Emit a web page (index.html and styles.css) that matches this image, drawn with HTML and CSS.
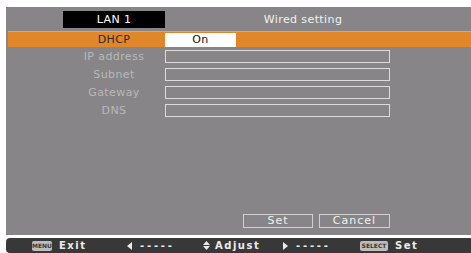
FILE: index.html
```html
<!DOCTYPE html>
<html lang="en">
<head>
    <meta charset="UTF-8">
    <title>Wired setting</title>
    <link rel="stylesheet" href="styles.css">
</head>
<body>
    <div class="panel">
        <div class="head">
            <div class="lan">LAN 1</div>
            <div class="title">Wired setting</div>
        </div>

        <div class="row dhcp">
            <div class="label">DHCP</div>
            <div class="value">On</div>
        </div>

        <div class="row">
            <div class="label off">IP address</div>
            <div class="field"></div>
        </div>
        <div class="row">
            <div class="label off">Subnet</div>
            <div class="field"></div>
        </div>
        <div class="row">
            <div class="label off">Gateway</div>
            <div class="field"></div>
        </div>
        <div class="row">
            <div class="label off">DNS</div>
            <div class="field"></div>
        </div>

        <div class="buttons">
            <div class="btn set">Set</div>
            <div class="btn cancel">Cancel</div>
        </div>
    </div>

    <div class="footer">
        <div class="group g1"><span class="badge menu">MENU</span><span>Exit</span></div>
        <div class="group g2">
            <svg class="arrow" width="5" height="8" viewBox="0 0 5 8"><path d="M5 0 L0 4 L5 8 Z" fill="#ececec"/></svg>
            <span class="dash">-----</span>
        </div>
        <div class="group g3">
            <svg class="arrow" width="7" height="9" viewBox="0 0 7 9"><path d="M3.5 0 L7 4 L0 4 Z M0 5 L7 5 L3.5 9 Z" fill="#ececec"/></svg>
            <span>Adjust</span>
        </div>
        <div class="group g4">
            <svg class="arrow" width="5" height="8" viewBox="0 0 5 8"><path d="M0 0 L5 4 L0 8 Z" fill="#ececec"/></svg>
            <span class="dash">-----</span>
        </div>
        <div class="group g5"><span class="badge select">SELECT</span><span>Set</span></div>
    </div>
</body>
</html>
```

FILE: styles.css
```css
body {
    margin: 0;
    background-color: #fff;
    font-family: "DejaVu Sans", sans-serif;
    font-size: 11px;
    letter-spacing: 0.4px;
}
.panel {
    margin: 7px 0 0 6px;
    height: 228px;
    padding-top: 4px;
    box-sizing: border-box;
    background-color: #878587;
    display: flex;
    flex-direction: column;
}
.head {
    display: flex;
    height: 17px;
    padding-left: 57px;
}
.lan {
    width: 102px;
    background-color: #000;
    color: #fff;
    text-align: center;
    line-height: 17px;
}
.title {
    width: 276px;
    color: #f2f2f2;
    text-align: center;
    line-height: 17px;
}
.row {
    display: flex;
    align-items: flex-start;
    height: 18px;
    padding-left: 57px;
}
.row .label {
    width: 102px;
    text-align: center;
    line-height: 19px;
}
.row .label.off {
    color: #b9b9b9;
}
.field {
    width: 223px;
    height: 11px;
    margin-top: 3px;
    border: 1px solid #dcdcdc;
}
.dhcp {
    height: 16px;
    margin: 3px 0 0 2px;
    padding-left: 55px;
    align-items: center;
    background-color: #df8729;
    border-top: 1px solid #eaa35a;
    box-sizing: border-box;
}
.dhcp .label {
    color: #2a2a2a;
    line-height: 15px;
}
.value {
    width: 71px;
    height: 14px;
    background-color: #fff;
    color: #111;
    text-align: center;
    line-height: 14px;
}
.buttons {
    margin-top: auto;
    margin-bottom: 7px;
    display: flex;
    gap: 6px;
    padding-left: 237px;
}
.btn {
    height: 12px;
    border: 1px solid #d0d0d0;
    color: #f2f2f2;
    text-align: center;
    line-height: 12px;
    letter-spacing: 1px;
}
.set {
    width: 68px;
}
.cancel {
    width: 69px;
}
.footer {
    margin: 3px 0 0 6px;
    height: 15px;
    background-color: #383838;
    border-radius: 4px 0 0 4px;
    display: flex;
    align-items: center;
    padding-left: 26px;
    color: #ececec;
    font-size: 10px;
    font-weight: bold;
    letter-spacing: 1.5px;
}
.group {
    display: flex;
    align-items: center;
}
.g1 { width: 95px; }
.g2 { width: 76px; }
.g3 { width: 80px; }
.g4 { width: 77px; }
.badge {
    background-color: #bdbdbd;
    color: #383838;
    font-size: 6px;
    letter-spacing: 0;
    height: 10px;
    line-height: 10px;
    text-align: center;
    border-radius: 2px;
    margin-right: 7px;
}
.menu { width: 20px; }
.select { width: 28px; }
.arrow {
    margin-right: 8px;
}
.g3 .arrow { margin-right: 5px; }
.dash {
    letter-spacing: 2.8px;
}
```
